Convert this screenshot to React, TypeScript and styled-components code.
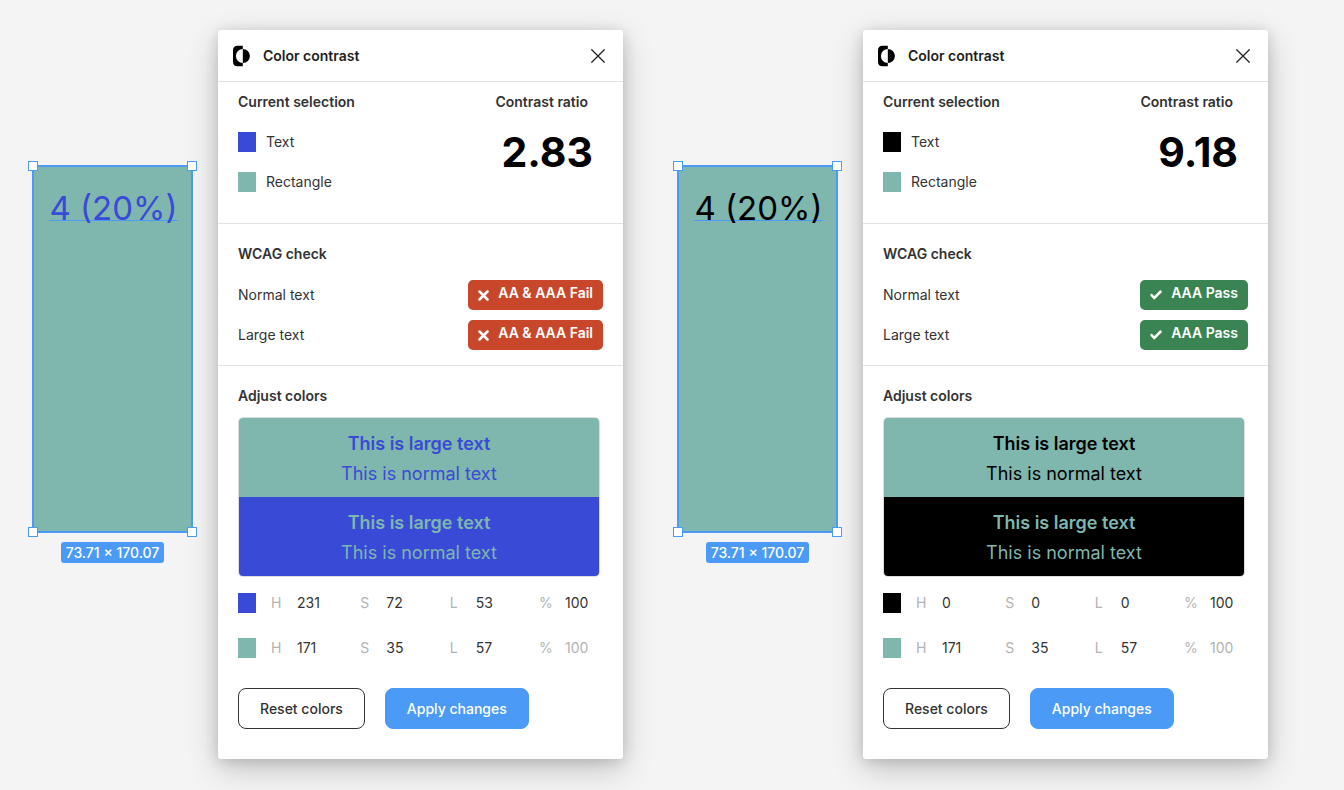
import React, { useId } from "react";
import styled, { createGlobalStyle } from "styled-components";

const teal = "#7fb6ad";
const blue = "#4b9bf6";

const GlobalStyle = createGlobalStyle`
  * {
    box-sizing: border-box;
  }
  body {
    margin: 0;
    background: #f4f4f4;
    color: #333333;
    font-family: Inter, "Liberation Sans", sans-serif;
    font-size: 14px;
    line-height: 20px;
  }
`;

const Page = styled.main`
  display: grid;
  grid-template-columns: repeat(2, minmax(0, 1fr));
  column-gap: 54px;
  padding: 30px 76px 31px 32px;
`;

const Scene = styled.div`
  display: flex;
  align-items: flex-start;
  gap: 25px;
`;

const Selected = styled.div`
  flex: none;
  display: flex;
  flex-direction: column;
  align-items: center;
  gap: 9px;
  margin-top: 135px;
`;

const Shape = styled.div`
  position: relative;
  display: flex;
  justify-content: center;
  align-items: flex-start;
  width: 161px;
  height: 368px;
  padding: 20px 0 0 2px;
  border: 2px solid ${blue};
  background: ${teal};
`;

const ShapeText = styled.div<{ $color: string }>`
  height: 34px;
  border-bottom: 1px solid ${blue};
  color: ${(p) => p.$color};
  font-size: 33px;
  line-height: 42px;
  white-space: nowrap;
`;

const Handle = styled.span<{ $x: "left" | "right"; $y: "top" | "bottom" }>`
  position: absolute;
  ${(p) => p.$x}: -6px;
  ${(p) => p.$y}: -6px;
  width: 10px;
  height: 10px;
  border: 1px solid ${blue};
  background: #ffffff;
`;

const SizeTag = styled.div`
  padding: 0 5px;
  border-radius: 3px;
  background: ${blue};
  color: #ffffff;
  font-weight: 500;
  line-height: 21px;
  white-space: nowrap;
`;

const Panel = styled.section`
  flex: 1;
  min-width: 0;
  border-radius: 3px;
  background: #ffffff;
  box-shadow: 0 10px 32px rgba(0, 0, 0, 0.2), 0 2px 14px rgba(0, 0, 0, 0.14);
`;

const Header = styled.header`
  display: flex;
  align-items: center;
  height: 52px;
  padding: 0 18px 0 14px;
  border-bottom: 1px solid #e2e2e2;
`;

const PanelTitle = styled.h1`
  flex: 1;
  margin: 0 0 0 13px;
  color: #1e1e1e;
  font-size: 14px;
  font-weight: 600;
`;

const CloseButton = styled.button`
  display: flex;
  padding: 0;
  border: 0;
  background: none;
  cursor: pointer;
`;

const Section = styled.div`
  padding: 20px 20px 15px;
  border-bottom: 1px solid #e2e2e2;
`;

const SelectionSection = styled(Section)`
  display: flex;
  justify-content: space-between;
  padding: 10px 20px 31px;
`;

const AdjustSection = styled(Section)`
  padding: 20px 20px 30px;
  border-bottom: 0;
`;

const Heading = styled.h2`
  margin: 0;
  font-size: 14px;
  font-weight: 600;
`;

const Layer = styled.div`
  display: flex;
  align-items: center;
  gap: 10px;
  margin-top: 20px;
`;

const Swatch = styled.span<{ $color: string }>`
  flex: none;
  width: 18px;
  height: 20px;
  background: ${(p) => p.$color};
`;

const Ratio = styled.div`
  padding-right: 10px;
  text-align: right;
`;

const RatioHeading = styled(Heading)`
  padding-right: 5px;
`;

const RatioValue = styled.div`
  margin-top: 16px;
  color: #000000;
  font-size: 41px;
  font-weight: 700;
  line-height: 48px;
`;

const CheckRows = styled.div`
  display: grid;
  gap: 10px;
  margin-top: 16px;
`;

const CheckRow = styled.div`
  display: flex;
  align-items: center;
  justify-content: space-between;
`;

const Verdict = styled.div<{ $pass: boolean }>`
  display: flex;
  align-items: center;
  gap: 9px;
  height: 30px;
  padding: 0 10px;
  border-radius: 5px;
  background: ${(p) => (p.$pass ? "#3a8453" : "#c8472b")};
  color: #ffffff;
  font-weight: 600;
`;

const VerdictText = styled.span`
  padding-bottom: 4px;
`;

const Preview = styled.div`
  margin: 11px 3px 0 0;
  overflow: hidden;
  border: 1px solid #dcdcdc;
  border-radius: 5px;
`;

const Sample = styled.div<{ $fg: string; $bg: string }>`
  padding: 11px 0 8px;
  background: ${(p) => p.$bg};
  color: ${(p) => p.$fg};
  font-size: 18px;
  line-height: 30px;
  text-align: center;
`;

const LargeText = styled.p`
  margin: 0;
  font-weight: 600;
`;

const NormalText = styled.p`
  margin: 0;
`;

const ColorLines = styled.div`
  display: grid;
  gap: 25px;
  margin-top: 16px;
`;

const ColorLine = styled.div`
  display: flex;
  align-items: center;
  gap: 15px;
`;

const Fields = styled.div`
  display: grid;
  grid-template-columns: repeat(3, minmax(0, 1fr)) 64px;
  flex: 1;
`;

const Field = styled.div`
  display: flex;
  align-items: center;
`;

const FieldLabel = styled.label`
  flex: none;
  width: 26px;
  color: #b3b3b3;
`;

const FieldInput = styled.input`
  width: 100%;
  min-width: 0;
  height: 20px;
  padding: 0;
  border: 0;
  background: none;
  color: #333333;
  font: inherit;

  &:disabled {
    color: #b3b3b3;
  }
`;

const Actions = styled.div`
  display: flex;
  gap: 20px;
  margin-top: 30px;
`;

const Button = styled.button<{ $primary?: boolean }>`
  height: 41px;
  padding: 0 21px;
  border: 1px solid ${(p) => (p.$primary ? blue : "#333333")};
  border-radius: 8px;
  background: ${(p) => (p.$primary ? blue : "#ffffff")};
  color: ${(p) => (p.$primary ? "#ffffff" : "#333333")};
  font: inherit;
  font-weight: 500;
  white-space: nowrap;
  cursor: pointer;
`;

const Logo = () => (
  <svg width="18" height="22" viewBox="0 0 18 22" aria-hidden="true">
    <path d="M10.8 0.8H5.6Q1 0.8 1 5.4V16.8Q1 21.3 5.6 21.3H10.8V17.9A6.9 6.9 0 0 1 10.8 4.1Z" />
    <path d="M10.8 3.9A7 7 0 0 1 10.8 18.1Z" />
  </svg>
);

const CloseIcon = () => (
  <svg width="14" height="14" viewBox="0 0 14 14" fill="none" stroke="#222222" strokeWidth="1.3" aria-hidden="true">
    <path d="M0.4 0.4L13.6 13.6M13.6 0.4L0.4 13.6" />
  </svg>
);

const FailIcon = () => (
  <svg width="11" height="11" viewBox="0 0 11 11" fill="none" stroke="#ffffff" strokeWidth="2.5" strokeLinecap="round" aria-hidden="true">
    <path d="M1.5 1.5L9.5 9.5M9.5 1.5L1.5 9.5" />
  </svg>
);

const PassIcon = () => (
  <svg width="12" height="10" viewBox="0 0 12 10" fill="none" stroke="#ffffff" strokeWidth="2.5" aria-hidden="true">
    <path d="M0.8 4.4L4.3 7.9L11.2 1" />
  </svg>
);

type Hsl = { h: number; s: number; l: number };

function ColorFields({ color, hsl, lockOpacity }: { color: string; hsl: Hsl; lockOpacity?: boolean }) {
  const id = useId();
  const fields: [string, number, boolean][] = [
    ["H", hsl.h, false],
    ["S", hsl.s, false],
    ["L", hsl.l, false],
    ["%", 100, !!lockOpacity],
  ];
  return (
    <ColorLine>
      <Swatch $color={color} />
      <Fields>
        {fields.map(([name, value, disabled]) => (
          <Field key={name}>
            <FieldLabel htmlFor={id + name}>{name}</FieldLabel>
            <FieldInput id={id + name} type="text" defaultValue={value} disabled={disabled} />
          </Field>
        ))}
      </Fields>
    </ColorLine>
  );
}

type SceneData = { color: string; hsl: Hsl; ratio: string; pass: boolean; verdict: string };

function ContrastScene({ color, hsl, ratio, pass, verdict }: SceneData) {
  return (
    <Scene>
      <Selected>
        <Shape>
          <ShapeText $color={color}>4 (20%)</ShapeText>
          <Handle $x="left" $y="top" />
          <Handle $x="right" $y="top" />
          <Handle $x="left" $y="bottom" />
          <Handle $x="right" $y="bottom" />
        </Shape>
        <SizeTag>73.71 × 170.07</SizeTag>
      </Selected>
      <Panel>
        <Header>
          <Logo />
          <PanelTitle>Color contrast</PanelTitle>
          <CloseButton type="button" aria-label="Close">
            <CloseIcon />
          </CloseButton>
        </Header>
        <SelectionSection>
          <div>
            <Heading>Current selection</Heading>
            <Layer>
              <Swatch $color={color} />
              Text
            </Layer>
            <Layer>
              <Swatch $color={teal} />
              Rectangle
            </Layer>
          </div>
          <Ratio>
            <RatioHeading>Contrast ratio</RatioHeading>
            <RatioValue>{ratio}</RatioValue>
          </Ratio>
        </SelectionSection>
        <Section>
          <Heading>WCAG check</Heading>
          <CheckRows>
            {["Normal text", "Large text"].map((label) => (
              <CheckRow key={label}>
                {label}
                <Verdict $pass={pass}>
                  {pass ? <PassIcon /> : <FailIcon />}
                  <VerdictText>{verdict}</VerdictText>
                </Verdict>
              </CheckRow>
            ))}
          </CheckRows>
        </Section>
        <AdjustSection>
          <Heading>Adjust colors</Heading>
          <Preview>
            <Sample $fg={color} $bg={teal}>
              <LargeText>This is large text</LargeText>
              <NormalText>This is normal text</NormalText>
            </Sample>
            <Sample $fg={teal} $bg={color}>
              <LargeText>This is large text</LargeText>
              <NormalText>This is normal text</NormalText>
            </Sample>
          </Preview>
          <ColorLines>
            <ColorFields color={color} hsl={hsl} />
            <ColorFields lockOpacity color={teal} hsl={{ h: 171, s: 35, l: 57 }} />
          </ColorLines>
          <Actions>
            <Button type="button">Reset colors</Button>
            <Button type="button" $primary>
              Apply changes
            </Button>
          </Actions>
        </AdjustSection>
      </Panel>
    </Scene>
  );
}

export default function App() {
  return (
    <>
      <GlobalStyle />
      <Page>
        <ContrastScene color="#394bd6" hsl={{ h: 231, s: 72, l: 53 }} ratio="2.83" pass={false} verdict="AA & AAA Fail" />
        <ContrastScene color="#000000" hsl={{ h: 0, s: 0, l: 0 }} ratio="9.18" pass verdict="AAA Pass" />
      </Page>
    </>
  );
}
